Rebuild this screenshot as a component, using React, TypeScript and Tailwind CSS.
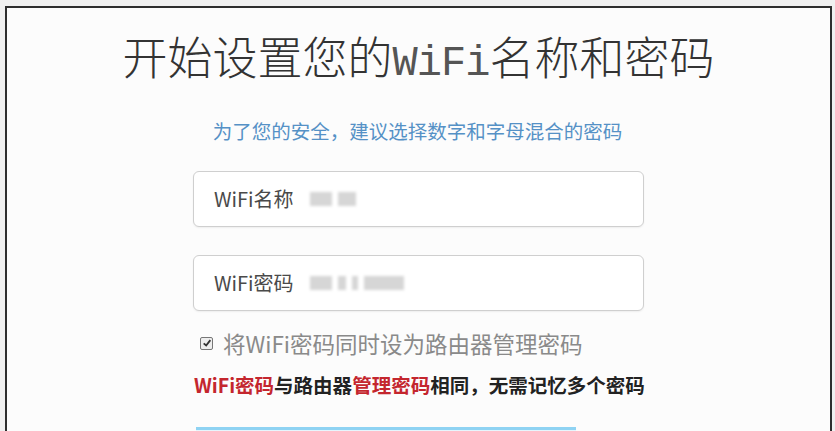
import React from 'react';

const cjk = { fontFamily: '"Noto Sans CJK SC", "Noto Sans", sans-serif' };

const Blur = ({ w }: { w: number[] }) => (
    <span className="flex items-center gap-[6px] ml-4">
        {w.map((x, i) => (
            <span key={i} className="h-[14px] bg-[#d6d6d6] blur-[1.5px]" style={{ width: x }}></span>
        ))}
    </span>
);

const App = () => {
    return (
        <div className="w-[835px] h-[431px] bg-[#f0f0f0] overflow-hidden pt-[6px] pl-[5px] pr-[3px]" style={cjk}>
            <div className="h-[440px] bg-[#fcfcfc] border-2 border-b-0 border-[#2e2e2e] flex flex-col items-center">
                {/* Title */}
                <h1 className="mt-[20px] text-[45px] leading-[56px] text-[#333] font-light">
                    开始设置您的<span className="font-['Liberation_Mono'] font-normal text-[42px] tracking-[-1px] text-[#555]">WiFi</span>名称和密码
                </h1>
                <p className="mt-[27px] text-[19.5px] leading-6 text-[#5591c6] ml-[-2px]">
                    为了您的安全，建议选择数字和字母混合的密码
                </p>

                <div className="w-[451px] mt-[28px] flex flex-col gap-[28px]">
                    {/* WiFi name */}
                    <div className="h-[56px] rounded-[6px] border border-[#cfcfcf] bg-white flex items-center px-5 shadow-[0_1px_2px_rgba(0,0,0,0.06)]">
                        <span className="text-[20px] text-[#4a4a4a]">WiFi名称</span>
                        <Blur w={[22, 18]} />
                    </div>
                    {/* WiFi password */}
                    <div className="h-[56px] rounded-[6px] border border-[#cfcfcf] bg-white flex items-center px-5 shadow-[0_1px_2px_rgba(0,0,0,0.06)]">
                        <span className="text-[20px] text-[#4a4a4a]">WiFi密码</span>
                        <Blur w={[22, 8, 6, 40]} />
                    </div>
                </div>

                <div className="w-[451px] mt-[18px] flex items-center pl-[7px]">
                    <span className="w-[13px] h-[13px] border border-[#777] bg-[#eee] flex items-center justify-center rounded-[2px]">
                        <svg viewBox="0 0 12 12" className="w-[10px] h-[10px]">
                            <path d="M2 6.5 L5 9 L10 2.5" fill="none" stroke="#333" strokeWidth="2.2" />
                        </svg>
                    </span>
                    <span className="ml-[10px] text-[22.5px] leading-7 text-[#8a8a8a]">将WiFi密码同时设为路由器管理密码</span>
                </div>

                <p className="w-[451px] mt-[16px] pl-[1px] text-[19.5px] leading-6 font-bold text-[#222] whitespace-nowrap">
                    <span className="text-[#c4262e]">WiFi密码</span>与路由器<span className="text-[#c4262e]">管理密码</span>相同，无需记忆多个密码
                </p>

                <div className="w-[451px] mt-[30px] pl-[3px]">
                    <div className="w-[380px] h-[10px] border-t-[3px] border-[#8fd3f3] bg-[#e6f6fd]"></div>
                </div>
            </div>
        </div>
    );
};

export default App;
